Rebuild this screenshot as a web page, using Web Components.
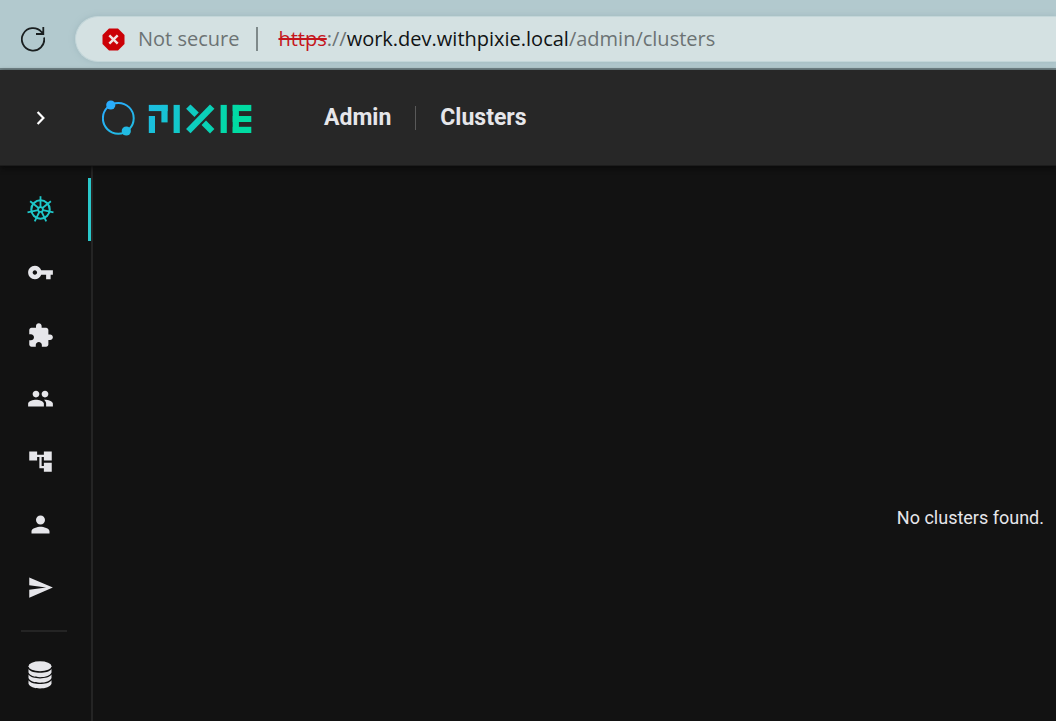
<!DOCTYPE html>
<html lang="en">
<head>
<meta charset="utf-8">
<title>Clusters - Pixie Admin</title>
<style>
  body { margin: 0; background: #121212; color: #e6e6ea; font-family: Roboto, sans-serif; }
</style>
</head>
<body>
<pixie-window>
  <browser-bar slot="browser"></browser-bar>
  <app-header slot="header"></app-header>
  <side-nav slot="nav">
    <nav-item icon="helm" label="Clusters" active></nav-item>
    <nav-item icon="key" label="API keys"></nav-item>
    <nav-item icon="plugin" label="Plugins"></nav-item>
    <nav-item icon="users" label="Users"></nav-item>
    <nav-item icon="tree" label="Organization"></nav-item>
    <nav-item icon="user" label="Profile"></nav-item>
    <nav-item icon="send" label="Invite"></nav-item>
    <nav-item slot="extra" icon="data" label="Data export"></nav-item>
  </side-nav>
  <empty-message>No clusters found.</empty-message>
</pixie-window>

<script>
class BaseElement extends HTMLElement {
  connectedCallback() {
    if (!this.shadowRoot) this.attachShadow({ mode: 'open' }).innerHTML = this.render();
  }
}

class PixieWindow extends BaseElement {
  render() {
    return `<style>
      :host { display: flex; flex-direction: column; min-height: 100vh; }
      .body { display: flex; flex: 1; }
      main { flex: 1; display: flex; flex-direction: column; }
    </style>
    <slot name="browser"></slot>
    <slot name="header"></slot>
    <div class="body"><slot name="nav"></slot><main><slot></slot></main></div>`;
  }
}

class BrowserBar extends BaseElement {
  render() {
    return `<style>
      :host { display: flex; align-items: flex-start; box-sizing: border-box; height: 70px; padding: 9px 0 0 21px; gap: 30px;
        background: #b2c9ce; border-bottom: 2px solid #74878b; font: 20px/28px "Open Sans", sans-serif; }
      button { display: flex; border: 0; padding: 18px 0 0; background: none; color: #1a1f20; }
      .field { flex: 1; display: flex; align-items: center; height: 44px; margin-top: 7px; padding-left: 26px;
        border: 1px solid #c3d6d9; border-right: 0; border-radius: 23px 0 0 23px; background: #d4e1e2; color: #6c7374;
        box-shadow: 0 0 6px #9fb8be; }
      .field svg { flex: none; margin-right: 13px; }
      .security { white-space: nowrap; }
      .bar { width: 2px; height: 24px; margin: 0 20px 0 17px; background: #7e898a; }
      a { color: inherit; text-decoration: none; white-space: nowrap; }
      s { color: #c5161d; text-decoration-thickness: 2px; }
      b { color: #101314; font-weight: 400; }
    </style>
    <button type="button" aria-label="Refresh"><svg width="24" height="25" viewBox="0 0 24 25" fill="none" stroke="currentColor" stroke-width="1.8">
      <path d="M23.1 10.500A11.200 11.200 0 1 1 20.500 5L22.400 6.900M22.300 0V7H15"/></svg></button>
    <div class="field">
      <svg width="23" height="23" viewBox="0 0 23 23"><path d="M7 .5h9L22.5 7v9L16 22.5H7L.5 16V7z" fill="#cb0006"/><path d="M7.300 7.300l8.400 8.400M15.700 7.300l-8.400 8.400" stroke="#f1e2e2" stroke-width="2.4"/></svg>
      <span class="security">Not secure</span><span class="bar"></span>
      <a href="https://work.dev.withpixie.local/admin/clusters"><s>https</s>://<b>work.dev.withpixie.local</b>/admin/clusters</a>
    </div>`;
  }
}

class PixieLogo extends BaseElement {
  render() {
    return `<style>:host { display: block; } svg { display: block; }</style>
    <svg width="151" height="36" viewBox="102 99 151 36" role="img" aria-label="Pixie">
      <defs><linearGradient id="g" gradientUnits="userSpaceOnUse" x1="149" y1="104" x2="232" y2="132">
        <stop offset="0" stop-color="#1dbce2"/><stop offset="1" stop-color="#00dba2"/></linearGradient>
      <linearGradient id="r" gradientUnits="userSpaceOnUse" x1="108" y1="101" x2="128" y2="134">
        <stop offset="0" stop-color="#2aabff"/><stop offset="1" stop-color="#20bde0"/></linearGradient></defs>
      <g fill="url(#r)"><circle cx="118.3" cy="117.3" r="15.4" fill="none" stroke="url(#r)" stroke-width="2"/>
        <circle cx="110.8" cy="104" r="4.6"/><circle cx="126.3" cy="130" r="4.6"/></g>
      <g fill="url(#g)">
        <rect x="148.8" y="103.9" width="18.800" height="6.2"/><rect x="161.4" y="103.9" width="6.200" height="17.5"/>
        <rect x="148.8" y="115" width="6.2" height="17"/><rect x="173.6" y="103.9" width="6.2" height="28.1"/>
        <rect x="220.6" y="103.9" width="6.2" height="28.1"/><rect x="232.7" y="103.9" width="6.2" height="28.1"/>
        <rect x="232.7" y="103.9" width="18.6" height="6.2"/><rect x="232.7" y="115" width="18.6" height="6"/><rect x="232.7" y="125.8" width="18.6" height="6.2"/>
      </g>
      <g stroke="url(#g)" stroke-width="6.2"><line x1="212.2" y1="105.6" x2="188.3" y2="130.2"/>
        <line x1="188.3" y1="105.6" x2="196.6" y2="113.8"/><line x1="203.8" y1="121.8" x2="212.2" y2="130.2"/></g>
    </svg>`;
  }
}

class AppHeader extends BaseElement {
  render() {
    return `<style>
      :host { display: flex; align-items: center; box-sizing: border-box; height: 96px; padding: 0 28px;
        background: #272727; border-bottom: 1px solid #1c1c1c; box-shadow: 0 2px 5px #0a0a0a; position: relative; }
      button { display: flex; border: 0; padding: 0; margin-right: 49px; background: none; color: #fff; }
      nav { display: flex; align-items: center; margin-left: 71px; font-size: 23px; line-height: 28px; font-weight: 700; }
      a { color: #e6e6ea; text-decoration: none; }
      i { width: 1px; height: 24px; margin: 0 24px; background: #595959; }
    </style>
    <button type="button" aria-label="Expand menu"><svg width="25" height="25" viewBox="0 0 25 25" fill="none" stroke="currentColor" stroke-width="2.2"><path d="M9.600 7l5.800 6-5.800 6"/></svg></button>
    <pixie-logo></pixie-logo>
    <nav aria-label="Breadcrumb"><a href="#admin">Admin</a><i></i><a href="#clusters">Clusters</a></nav>`;
  }
}

class SideNav extends BaseElement {
  render() {
    return `<style>
      :host { display: block; flex: none; box-sizing: border-box; width: 93px; padding-top: 12px; border-right: 2px solid #242424; }
      hr { width: 46px; height: 2px; margin: 11px 0 11px 21px; border: 0; background: #242424; }
    </style>
    <nav aria-label="Admin sections"><slot></slot><hr><slot name="extra"></slot></nav>`;
  }
}

const spokes = Array.from({ length: 7 }, (_, i) =>
  `<path d="M13.500 11V.2" transform="rotate(${i * 360 / 7} 13.500 13.500)"/>`).join('');
const icons = {
  helm: `<svg width="27" height="27" viewBox="0 0 27 27" fill="none" stroke="currentColor" stroke-width="1.8"><circle cx="13.500" cy="13.500" r="9.200" stroke-width="2.1"/><circle cx="13.500" cy="13.500" r="2.400"/>${spokes}</svg>`,
  key: 'M12.65 10C11.83 7.67 9.61 6 7 6c-3.31 0-6 2.69-6 6s2.69 6 6 6c2.61 0 4.83-1.67 5.65-4H17v4h4v-4h2v-4H12.65zM7 14c-1.1 0-2-.9-2-2s.9-2 2-2 2 .9 2 2-.9 2-2 2z',
  plugin: 'M20.5 11H19V7c0-1.1-.9-2-2-2h-4V3.500C13 2.120 11.880 1 10.500 1S8 2.120 8 3.500V5H4c-1.100 0-1.990.9-1.990 2v3.800H3.500c1.490 0 2.700 1.210 2.700 2.700s-1.210 2.700-2.700 2.700H2V20c0 1.100.9 2 2 2h3.800v-1.500c0-1.490 1.210-2.700 2.700-2.700 1.490 0 2.700 1.210 2.700 2.700V22H17c1.100 0 2-.9 2-2v-4h1.500c1.380 0 2.500-1.120 2.500-2.500S21.880 11 20.500 11z',
  users: 'M16 11c1.660 0 2.990-1.340 2.990-3S17.660 5 16 5c-1.660 0-3 1.340-3 3s1.340 3 3 3zm-8 0c1.660 0 2.990-1.340 2.990-3S9.660 5 8 5C6.340 5 5 6.340 5 8s1.340 3 3 3zm0 2c-2.330 0-7 1.170-7 3.500V19h14v-2.500c0-2.330-4.670-3.500-7-3.500zm8 0c-.29 0-.62.02-.97.05 1.160.84 1.970 1.970 1.970 3.450V19h6v-2.500c0-2.330-4.670-3.500-7-3.500z',
  tree: 'M22 11V3h-7v3H9V3H2v8h7V8h2v10h4v3h7v-8h-7v3h-2V8h2v3z',
  user: 'M12 12c2.210 0 4-1.790 4-4s-1.790-4-4-4-4 1.790-4 4 1.790 4 4 4zm0 2c-2.670 0-8 1.340-8 4v2h16v-2c0-2.660-5.330-4-8-4z',
  send: 'M2.010 21L23 12 2.010 3 2 10l15 2-15 2z',
  data: `<svg width="25" height="28" viewBox="0 0 25 28" fill="currentColor"><ellipse cx="12" cy="5.200" rx="11.500" ry="5"/>
    <path id="b" d="M.5 8c2 2.900 6.500 3.800 11.500 3.800S21.500 10.900 23.500 8v3.500c-1 3-6 4.700-11.500 4.700S1.500 14.500.5 11.500z"/><use href="#b" y="5.600"/><use href="#b" y="11.200"/></svg>`
};

class NavItem extends BaseElement {
  render() {
    const icon = icons[this.getAttribute('icon')];
    const drawing = icon[0] === '<' ? icon
      : `<svg width="27" height="27" viewBox="0 0 24 24" fill="currentColor"><path d="${icon}"/></svg>`;
    return `<style>
      :host { display: block; }
      a { display: flex; align-items: center; justify-content: center; box-sizing: border-box; height: 63px;
        padding-right: 7px; border-right: 3px solid transparent; color: #e6e6ea; }
      :host([active]) a { color: #1fc7c9; border-color: #2ac8cb; }
    </style>
    <a href="#${this.getAttribute('icon')}" aria-label="${this.getAttribute('label')}">${drawing}</a>`;
  }
}

class EmptyMessage extends BaseElement {
  render() {
    return `<style>
      :host { display: flex; flex: 1; align-items: center; justify-content: flex-end; padding: 148px 12px 0 0; font-size: 18px; line-height: 24px; }
      p { margin: 0; }
    </style><p><slot></slot></p>`;
  }
}

customElements.define('pixie-window', PixieWindow);
customElements.define('browser-bar', BrowserBar);
customElements.define('pixie-logo', PixieLogo);
customElements.define('app-header', AppHeader);
customElements.define('side-nav', SideNav);
customElements.define('nav-item', NavItem);
customElements.define('empty-message', EmptyMessage);
</script>
</body>
</html>
